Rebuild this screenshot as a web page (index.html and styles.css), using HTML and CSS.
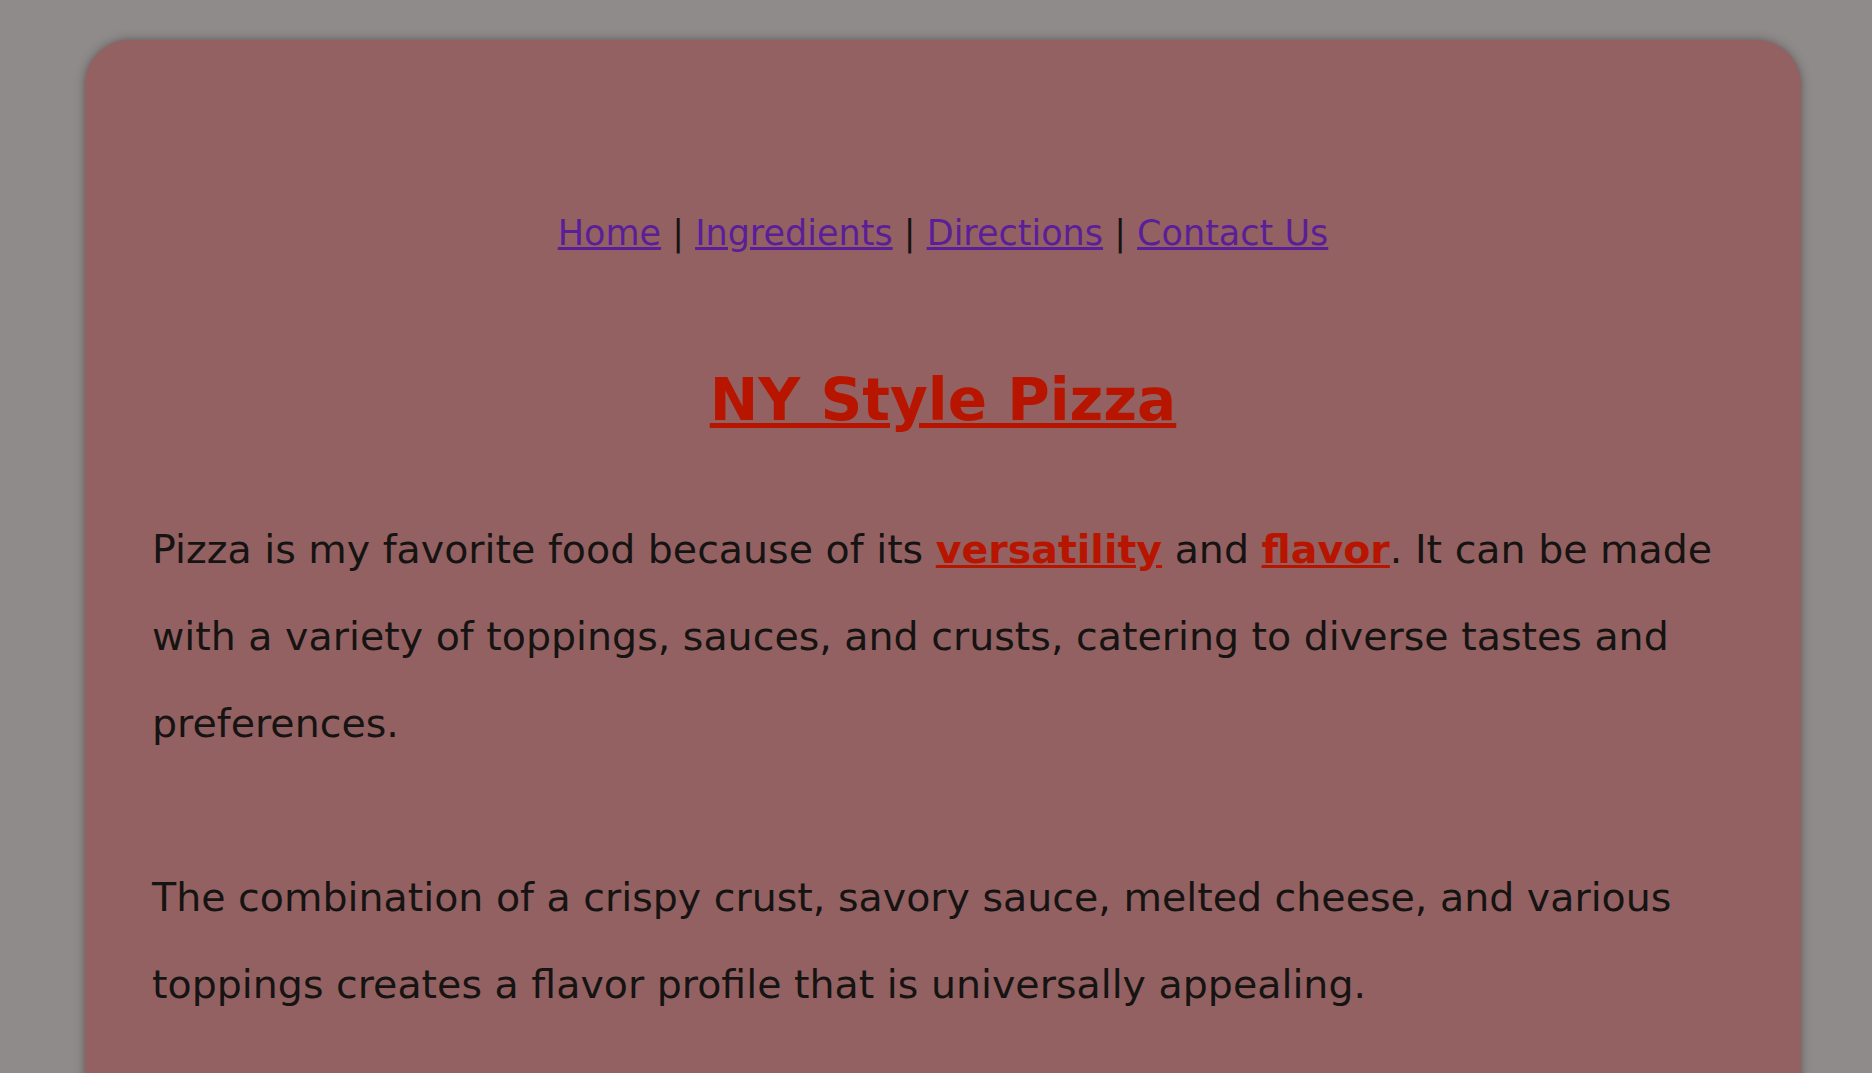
FILE: index.html
```html
<!DOCTYPE html>
<html lang="en">
<head>
<meta charset="utf-8">
<title>NY Style Pizza</title>
<link rel="stylesheet" href="styles.css">
</head>
<body>
<main class="card">
  <nav class="nav">
    <a href="#" class="nav-link">Home</a> | <a href="#" class="nav-link">Ingredients</a> | <a href="#" class="nav-link">Directions</a> | <a href="#" class="nav-link">Contact Us</a>
  </nav>
  <h1 class="title"><a href="#" class="title-link">NY Style Pizza</a></h1>
  <p class="text">Pizza is my favorite food because of its <a href="#" class="hl">versatility</a> and <a href="#" class="hl">flavor</a>. It can be made with a variety of toppings, sauces, and crusts, catering to diverse tastes and preferences.</p>
  <p class="text">The combination of a crispy crust, savory sauce, melted cheese, and various toppings creates a flavor profile that is universally appealing.</p>
</main>
</body>
</html>
```

FILE: styles.css
```css
html, body {
  margin: 0;
  padding: 0;
  background: #8f8b8b;
  height: 100%;
  overflow: hidden;
}

.card {
  box-sizing: border-box;
  margin: 40px 0 0 85px;
  width: 1716px;
  min-height: 1200px;
  background: #936161;
  border-radius: 45px;
  box-shadow: 0 0 10px rgba(60, 40, 40, 0.55);
  padding: 165px 67px 0 67px;
  font-family: "DejaVu Sans", sans-serif;
  color: #161313;
}

.nav {
  text-align: center;
  font-size: 35px;
  line-height: 56px;
}

.nav-link {
  color: #5a1f98;
}

.title {
  margin: 99px 0 0 0;
  text-align: center;
  font-size: 58px;
  line-height: 80px;
  font-weight: bold;
}

.title-link {
  color: #b81500;
}

.text {
  margin: 66px 0 0 0;
  font-size: 39.5px;
  line-height: 87px;
}

.text + .text {
  margin-top: 87px;
}

.hl {
  color: #b81500;
  font-weight: bold;
}
```
